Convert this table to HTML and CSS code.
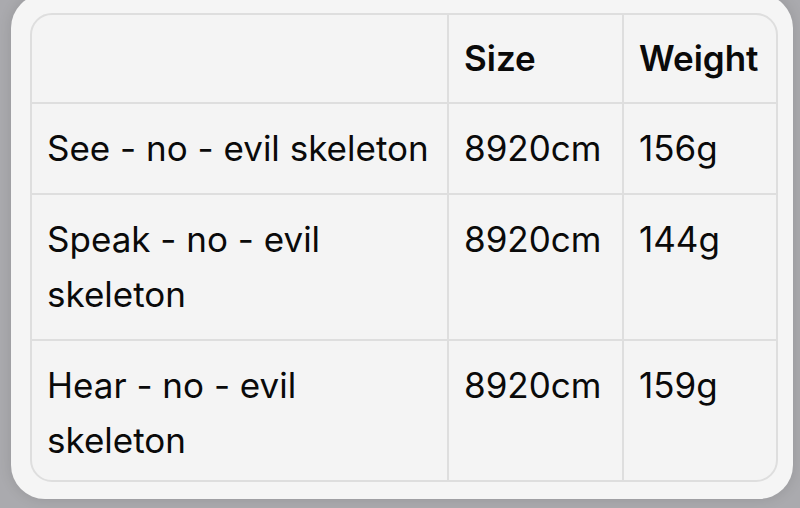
FILE: index.html
```html
<!DOCTYPE html>
<html>
<head>
<meta charset="utf-8">
<link rel="stylesheet" href="styles.css">
</head>
<body>
<div class="card">
  <table class="spec">
    <colgroup>
      <col class="c1"><col class="c2"><col class="c3">
    </colgroup>
    <thead>
      <tr><th></th><th>Size</th><th>Weight</th></tr>
    </thead>
    <tbody>
      <tr><td>See - no - evil skeleton</td><td>8920cm</td><td>156g</td></tr>
      <tr><td>Speak - no - evil skeleton</td><td>8920cm</td><td>144g</td></tr>
      <tr><td>Hear - no - evil skeleton</td><td>8920cm</td><td>159g</td></tr>
    </tbody>
  </table>
</div>
</body>
</html>
```
FILE: styles.css
```css
html, body {
  margin: 0;
  padding: 0;
  height: 100%;
}
body {
  background: #aaaaae;
  overflow: hidden;
  font-family: Inter, "Noto Sans", sans-serif;
  color: #0a0a0a;
}
.card {
  margin: -6px 0 0 11px;
  width: 782px;
  box-sizing: border-box;
  height: 505px;
  background: #f5f5f5;
  border-radius: 34px;
  padding: 19px 17px 18px 19px;
  box-shadow: 0 0 14px rgba(0,0,0,0.12);
}
.spec {
  border-collapse: separate;
  border-spacing: 0;
  table-layout: fixed;
  width: 746px;
  box-sizing: border-box;
  background: #f4f4f4;
  border: 2px solid #dedede;
  border-radius: 22px;
  font-size: 35px;
  line-height: 55px;
}
.c1 { width: 417px; }
.c2 { width: 175px; }
.c3 { width: 152px; }
.spec th, .spec td {
  text-align: left;
  vertical-align: top;
  padding: 17px 14px 17px 15px;
  border-right: 2px solid #dedede;
  border-bottom: 2px solid #dedede;
  font-weight: 400;
}
.spec th {
  font-weight: 600;
  padding-top: 16px;
  padding-bottom: 16px;
}
.spec tr > :last-child { border-right: none; }
.spec tbody tr:last-child td { border-bottom: none; padding-bottom: 12px; }
```
